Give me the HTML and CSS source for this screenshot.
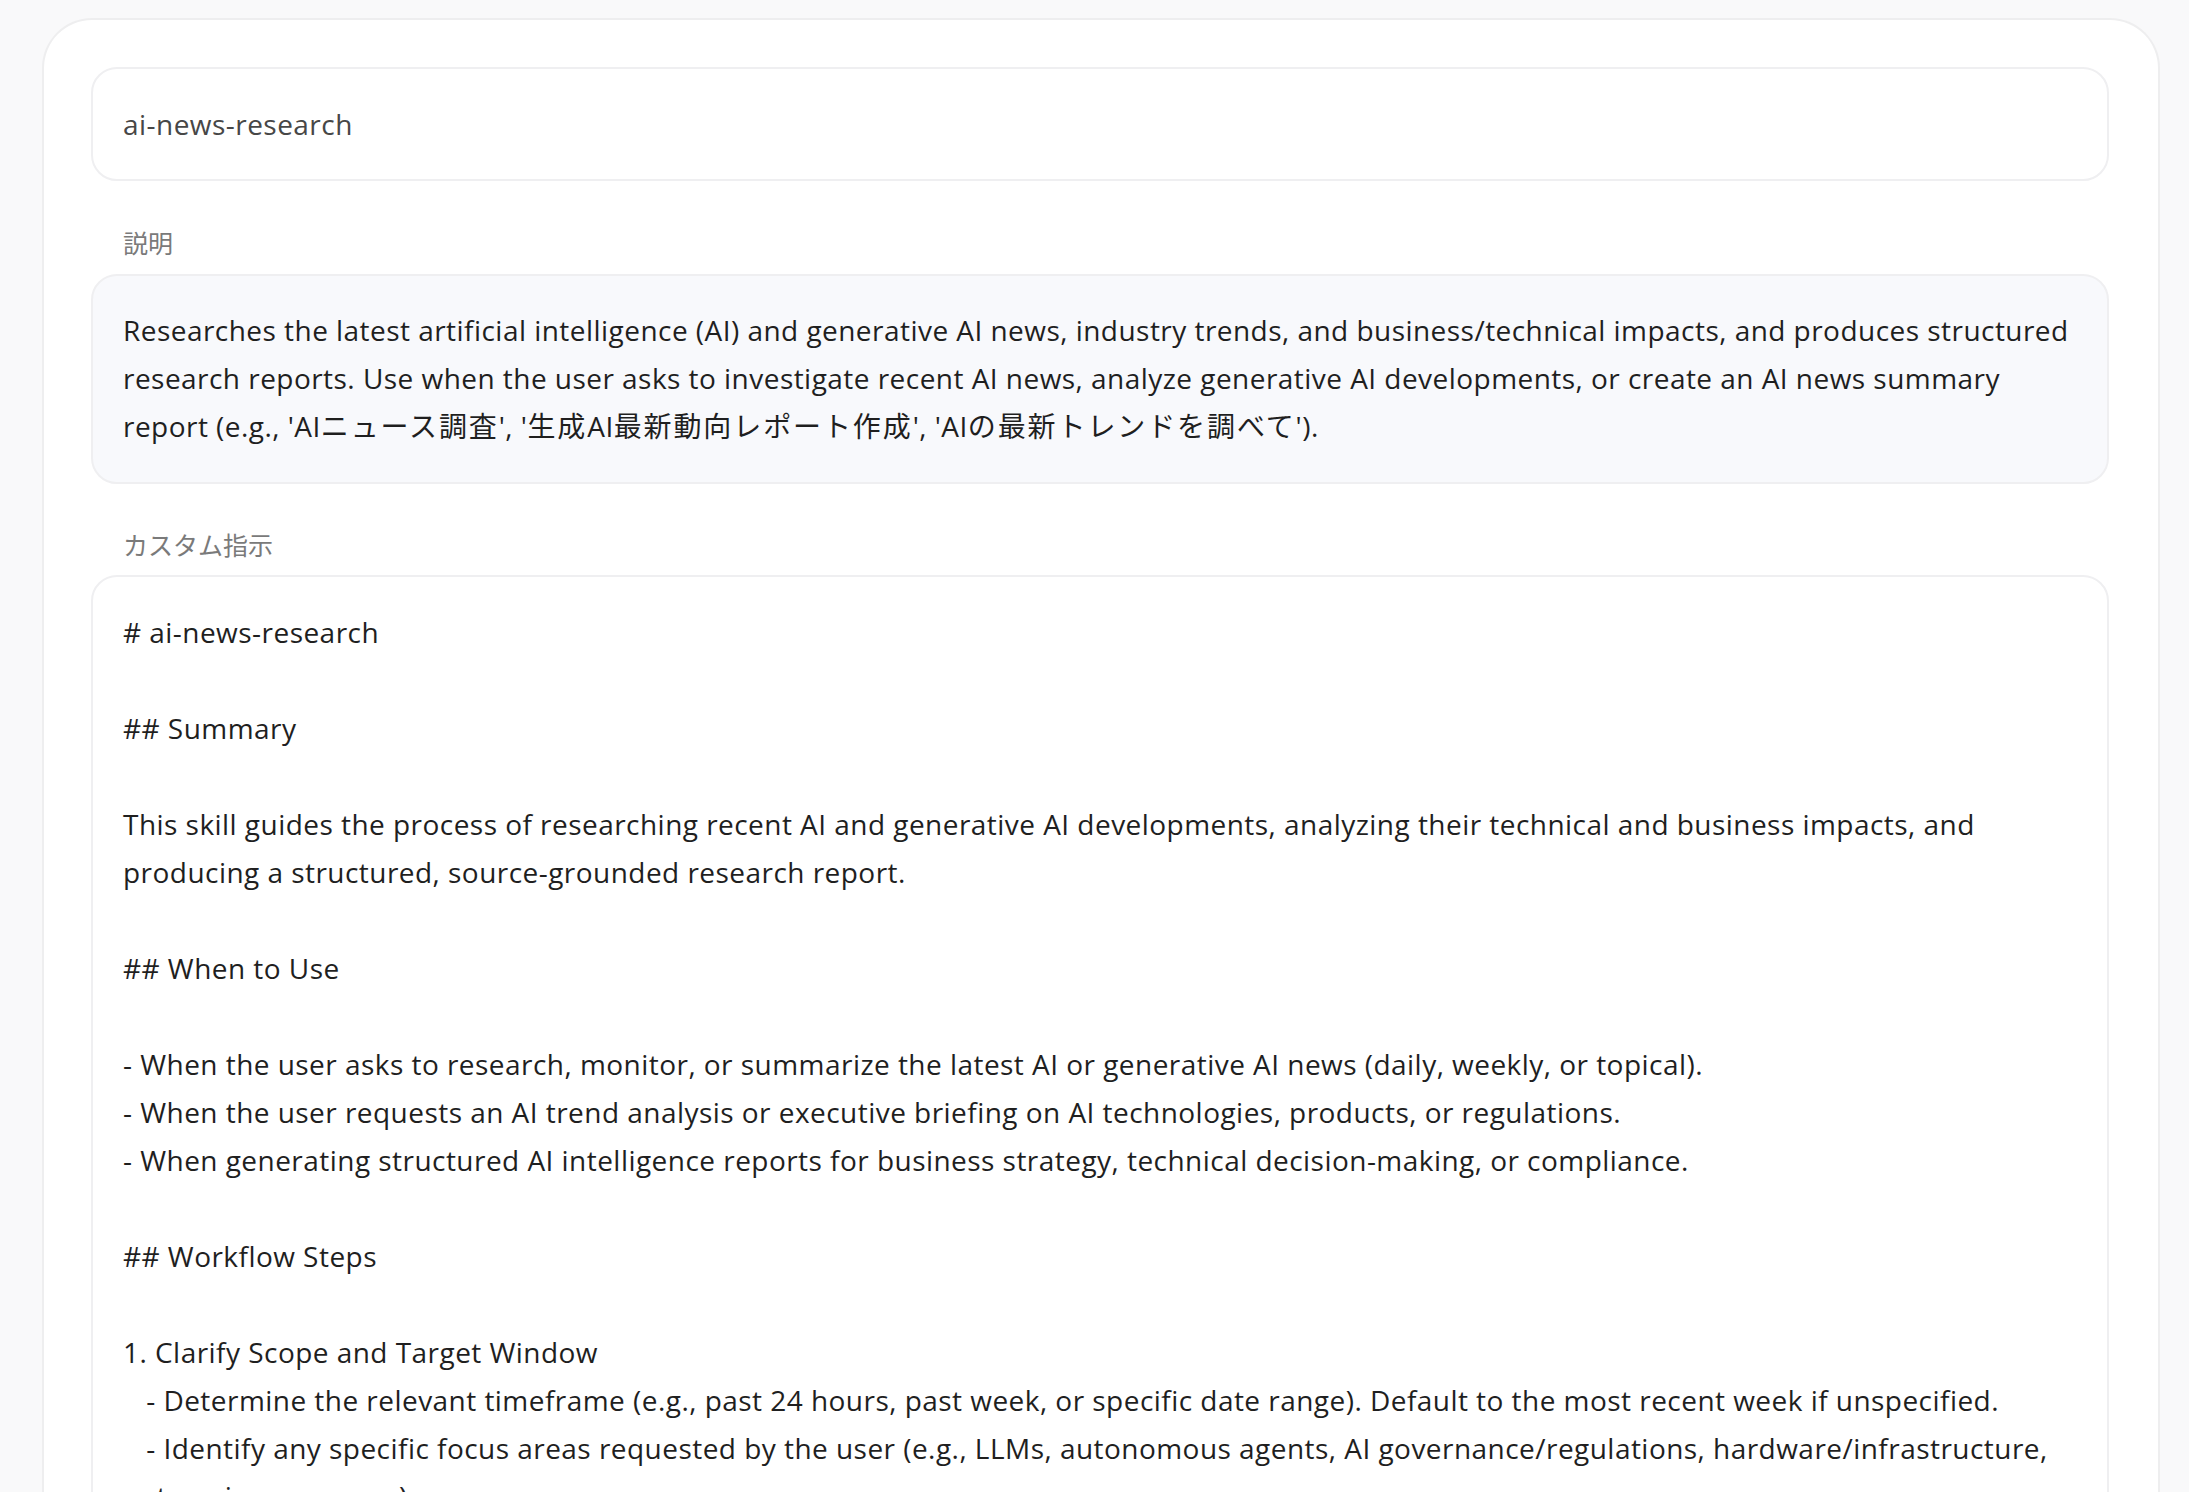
FILE: index.html
```html
<!DOCTYPE html>
<html lang="ja">
<head>
<meta charset="utf-8">
<title>ai-news-research</title>
<link rel="stylesheet" href="styles.css">
</head>
<body>
<div class="page">
  <main class="card">
    <div class="field name-field">ai-news-research</div>

    <div class="label">説明</div>
    <div class="field desc-field">Researches the latest artificial intelligence (AI) and generative AI news, industry trends, and business/technical impacts, and produces structured research reports. Use when the user asks to investigate recent AI news, analyze generative AI developments, or create an AI news summary report (e.g., 'AI<span class="ja">ニュース調査</span>', '<span class="ja">生成</span>AI<span class="ja">最新動向レポート作成</span>', 'AI<span class="ja">の最新トレンドを調べて</span>').</div>

    <div class="label">カスタム指示</div>
    <div class="field instr-field"># ai-news-research

## Summary

This skill guides the process of researching recent AI and generative AI developments, analyzing their technical and business impacts, and producing a structured, source-grounded research report.

## When to Use

- When the user asks to research, monitor, or summarize the latest AI or generative AI news (daily, weekly, or topical).
- When the user requests an AI trend analysis or executive briefing on AI technologies, products, or regulations.
- When generating structured AI intelligence reports for business strategy, technical decision-making, or compliance.

## Workflow Steps

1. Clarify Scope and Target Window
   - Determine the relevant timeframe (e.g., past 24 hours, past week, or specific date range). Default to the most recent week if unspecified.
   - Identify any specific focus areas requested by the user (e.g., LLMs, autonomous agents, AI governance/regulations, hardware/infrastructure, enterprise use cases).</div>
  </main>
</div>
</body>
</html>
```

FILE: styles.css
```css
html, body {
  margin: 0;
  padding: 0;
  height: 100%;
  overflow: hidden;
}

body {
  background: #f9f9fa;
  font-family: "Open Sans", "Noto Sans CJK JP", sans-serif;
  color: #1f1f1f;
}

.page {
  padding: 18px 29px 0 42px;
}

.card {
  background: #ffffff;
  border: 2px solid #eeeeef;
  border-bottom: none;
  border-radius: 50px 50px 0 0;
  padding: 47px 49px 0 47px;
  min-height: 1600px;
}

.field {
  border: 2px solid #efeff1;
  border-radius: 26px;
  font-size: 28px;
  line-height: 48px;
  letter-spacing: 0.46px;
  color: #1f1f1f;
}

.name-field {
  height: 110px;
  display: flex;
  align-items: center;
  padding: 0 30px;
  color: #474747;
}

.label {
  margin: 46px 0 15px 32px;
  font-size: 25px;
  line-height: 32px;
  color: #7a7a7a;
}

.desc-field {
  background: #f8f9fc;
  padding: 30px 30px 32px;
}

.ja {
  letter-spacing: 1.9px;
}

.instr-field {
  padding: 31px 30px;
  white-space: pre-wrap;
}

.desc-field + .label {
  margin-top: 45px;
  margin-bottom: 14px;
}
```
